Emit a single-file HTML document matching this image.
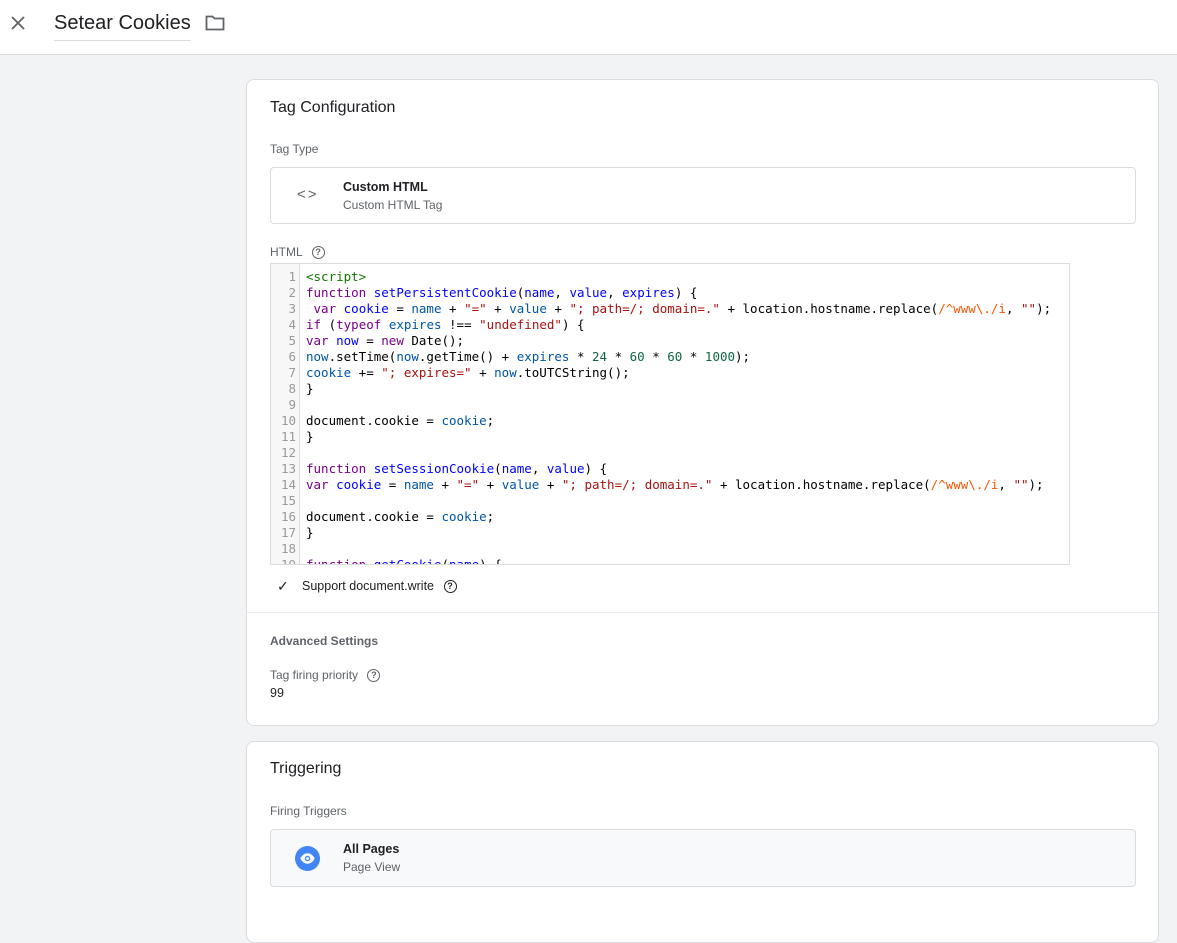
<!DOCTYPE html>
<html><head><meta charset="utf-8"><style>
body{margin:0;width:1177px;height:907px;overflow:hidden;background:#f1f3f4;font-family:"Liberation Sans",Arial,sans-serif;color:#202124;position:relative}
.hdr{position:absolute;left:0;top:0;width:1177px;height:54px;background:#fff;border-bottom:1px solid #dadce0}
.abs{position:absolute}
.card{position:absolute;left:246px;width:911px;background:#fff;border:1px solid #dadce0;border-radius:8px}
.lbl{position:absolute;font-size:12px;color:#5f6368}
.box{position:absolute;left:23px;width:864px;height:55px;border:1px solid #dadce0;border-radius:4px}
.code{position:absolute;left:270px;top:263px;width:798px;height:300px;border:1px solid #dadce0;overflow:hidden;font-family:"DejaVu Sans Mono",monospace;font-size:12.5px;line-height:16px;background:#fff}
.gut{position:absolute;left:0;top:0;width:29px;height:100%;background:#f7f7f7;border-right:1px solid #ddd;text-align:right;color:#999;padding-top:5px;box-sizing:border-box}
.gut div{padding-right:3px}
.src{position:absolute;left:35px;top:5px;white-space:pre;color:#000}
.k{color:#708}.d{color:#00f}.v{color:#05a}.s{color:#a11}.n{color:#164}.r{color:#f50}.t{color:#170}
.q{display:inline-block;width:11px;height:11px;border:1.5px solid #5f6368;border-radius:50%;font-size:9px;line-height:11px;text-align:center;color:#5f6368;font-weight:bold;vertical-align:middle}
</style></head><body>
<div class="hdr">
<svg class="abs" style="left:10px;top:15px" width="16" height="16" viewBox="0 0 16 16"><path d="M2 2L14 14M14 2L2 14" stroke="#5f6368" stroke-width="1.8"/></svg>
<div class="abs" style="left:54px;top:12px;font-size:20px;color:#202124">Setear Cookies</div>
<div class="abs" style="left:54px;top:40px;width:137px;height:1px;background:#dadce0"></div>
<svg class="abs" style="left:205px;top:15px" width="20" height="16" viewBox="0 0 20 16"><path d="M1.5 1.5h6l2 2h9v11h-17z" fill="none" stroke="#5f6368" stroke-width="1.8"/></svg>
</div>
<div class="card" style="top:79px;height:645px">
<div class="abs" style="left:23px;top:19px;font-size:16px">Tag Configuration</div>
<div class="lbl" style="left:23px;top:62px">Tag Type</div>
<div class="box" style="top:87px">
<div class="abs" style="left:26px;top:18px;font-size:15px;color:#5f6368;letter-spacing:2px">&lt;&gt;</div>
<div class="abs" style="left:72px;top:12px;font-size:12.5px;font-weight:bold">Custom HTML</div>
<div class="abs" style="left:72px;top:30px;font-size:12px;color:#5f6368">Custom HTML Tag</div>
</div>
<div class="lbl" style="left:23px;top:165px">HTML <span class="q" style="margin-left:6px">?</span></div>
<div class="abs" style="left:0;top:532px;width:911px;height:1px;background:#e8eaed"></div>
<div class="abs" style="left:30px;top:498px;font-size:14px;color:#202124">✓</div>
<div class="abs" style="left:55px;top:499px;font-size:12.5px">Support document.write <span class="q" style="margin-left:6px;border-color:#202124;color:#202124">?</span></div>
<div class="lbl" style="left:23px;top:554px;font-weight:bold">Advanced Settings</div>
<div class="lbl" style="left:23px;top:588px">Tag firing priority <span class="q" style="margin-left:6px">?</span></div>
<div class="abs" style="left:23px;top:606px;font-size:12.5px">99</div>
</div>
<div class="code"><div class="gut"><div>1</div><div>2</div><div>3</div><div>4</div><div>5</div><div>6</div><div>7</div><div>8</div><div>9</div><div>10</div><div>11</div><div>12</div><div>13</div><div>14</div><div>15</div><div>16</div><div>17</div><div>18</div><div>19</div></div>
<div class="src"><span class="t">&lt;script&gt;</span>
<span class="k">function</span> <span class="d">setPersistentCookie</span>(<span class="d">name</span>, <span class="d">value</span>, <span class="d">expires</span>) {
 <span class="k">var</span> <span class="d">cookie</span> = <span class="v">name</span> + <span class="s">"="</span> + <span class="v">value</span> + <span class="s">"; path=/; domain=."</span> + location.hostname.replace(<span class="r">/^www\./i</span>, <span class="s">""</span>);
<span class="k">if</span> (<span class="k">typeof</span> <span class="v">expires</span> !== <span class="s">"undefined"</span>) {
<span class="k">var</span> <span class="d">now</span> = <span class="k">new</span> Date();
<span class="v">now</span>.setTime(<span class="v">now</span>.getTime() + <span class="v">expires</span> * <span class="n">24</span> * <span class="n">60</span> * <span class="n">60</span> * <span class="n">1000</span>);
<span class="v">cookie</span> += <span class="s">"; expires="</span> + <span class="v">now</span>.toUTCString();
}

document.cookie = <span class="v">cookie</span>;
}

<span class="k">function</span> <span class="d">setSessionCookie</span>(<span class="d">name</span>, <span class="d">value</span>) {
<span class="k">var</span> <span class="d">cookie</span> = <span class="v">name</span> + <span class="s">"="</span> + <span class="v">value</span> + <span class="s">"; path=/; domain=."</span> + location.hostname.replace(<span class="r">/^www\./i</span>, <span class="s">""</span>);

document.cookie = <span class="v">cookie</span>;
}

<span class="k">function</span> <span class="d">getCookie</span>(<span class="d">name</span>) {</div></div>
<div class="card" style="top:741px;height:200px">
<div class="abs" style="left:23px;top:18px;font-size:16px">Triggering</div>
<div class="lbl" style="left:23px;top:62px">Firing Triggers</div>
<div class="box" style="top:87px;height:56px;background:#f8f9fa">
<svg class="abs" style="left:24px;top:16px" width="25" height="25" viewBox="0 0 24 24"><circle cx="12" cy="12" r="12" fill="#4285f4"/><path d="M5 12c2-3.5 4.5-5 7-5s5 1.5 7 5c-2 3.5-4.5 5-7 5s-5-1.5-7-5z" fill="#fff"/><circle cx="12" cy="12" r="2.6" fill="#4285f4"/><circle cx="12" cy="12" r="1.3" fill="#fff"/></svg>
<div class="abs" style="left:72px;top:12px;font-size:12.5px;font-weight:bold">All Pages</div>
<div class="abs" style="left:72px;top:30px;font-size:12px;color:#5f6368">Page View</div>
</div>
</div>
</body></html>
